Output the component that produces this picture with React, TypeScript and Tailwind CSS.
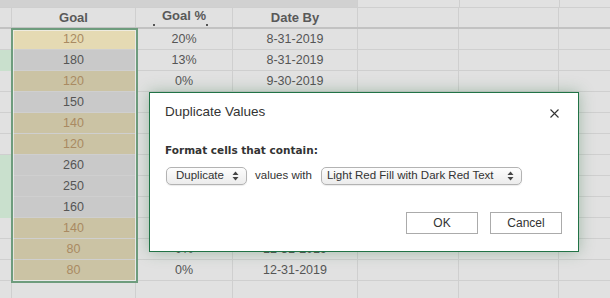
type Row = { goal: string; pct: string; date: string; fill: 'yellow' | 'tan' | 'gray'; mark?: boolean }

const rows: Row[] = [
  { goal: '120', pct: '20%', date: '8-31-2019', fill: 'yellow' },
  { goal: '180', pct: '13%', date: '8-31-2019', fill: 'gray', mark: true },
  { goal: '120', pct: '0%', date: '9-30-2019', fill: 'tan' },
  { goal: '150', pct: '0%', date: '9-30-2019', fill: 'gray' },
  { goal: '140', pct: '0%', date: '10-31-2019', fill: 'tan' },
  { goal: '120', pct: '0%', date: '10-31-2019', fill: 'tan' },
  { goal: '260', pct: '0%', date: '11-30-2019', fill: 'gray', mark: true },
  { goal: '250', pct: '0%', date: '11-30-2019', fill: 'gray', mark: true },
  { goal: '160', pct: '0%', date: '11-30-2019', fill: 'gray', mark: true },
  { goal: '140', pct: '0%', date: '12-31-2019', fill: 'tan' },
  { goal: '80', pct: '0%', date: '12-31-2019', fill: 'tan' },
  { goal: '80', pct: '0%', date: '12-31-2019', fill: 'tan' },
]

const fillClass = {
  yellow: 'bg-[#e5dab3] text-[#a98a62]',
  tan: 'bg-[#cbc3a4] text-[#a98a62]',
  gray: 'bg-[#c9c9c9] text-[#555]',
}

// mac-style up/down stepper arrows
function Arrows() {
  return (
    <svg width="7" height="10" viewBox="0 0 7 10">
      <path d="M3.5 0.5 L6.5 4 L0.5 4 Z" fill="#444" />
      <path d="M3.5 9.5 L6.5 6 L0.5 6 Z" fill="#444" />
    </svg>
  )
}

function Select({ label, width, pad }: { label: string; width: string; pad: string }) {
  return (
    <div
      className={`${width} ${pad} h-[18px] flex items-center justify-between pr-[7px] rounded-[5px] border border-[#b3b3b3] bg-gradient-to-b from-[#fdfdfd] to-[#ececec] shadow-[0_1px_1px_rgba(0,0,0,0.08)] text-[11.5px] text-[#333]`}
    >
      <span>{label}</span>
      <Arrows />
    </div>
  )
}

export default function App() {
  return (
    <div
      className="relative w-[610px] h-[298px] overflow-hidden bg-[#e1e1e1] text-[12px]"
      style={{ fontFamily: '"Liberation Sans", Arial, sans-serif' }}
    >
      {/* top strip */}
      <div className="flex h-[8px] border-b border-[#cfcfcf]">
        <div className="w-[357px] bg-[#d1d1d1]" />
        <div className="w-[102px] border-l border-[#cfcfcf]" />
        <div className="w-[100px] border-l border-[#cfcfcf]" />
        <div className="flex-1 border-l border-[#cfcfcf]" />
      </div>

      {/* header */}
      <div className="flex h-[21px] border-b-2 border-[#c2c2c2] font-bold text-[#595959] text-[13px]">
        <div className="w-[12px] border-r border-[#cfcfcf]" />
        <div className="w-[124px] border-r border-[#cfcfcf] flex items-center justify-center">Goal</div>
        <div className="relative w-[97px] border-r border-[#cfcfcf] flex items-center justify-center pb-1">
          Goal %
          <span className="absolute left-[17px] bottom-[1px] w-[2px] h-[2px] bg-[#555]" />
          <span className="absolute right-[24px] bottom-[1px] w-[2px] h-[2px] bg-[#555]" />
        </div>
        <div className="w-[125px] border-r border-[#cfcfcf] flex items-center justify-center">Date By</div>
        <div className="w-[101px] border-r border-[#cfcfcf]" />
        <div className="w-[100px] border-r border-[#cfcfcf]" />
        <div className="flex-1" />
      </div>

      {/* data rows */}
      {rows.map((r, i) => (
        <div key={i} className="flex h-[21px] text-[#555] text-[12.5px]">
          <div className={`w-[12px] border-r border-b border-[#cfcfcf] ${r.mark ? 'bg-[#c9e0cd] border-b-[#c9e0cd]' : ''}`} />
          <div className={`w-[124px] border-r border-b border-[#cfcfcf] flex items-center justify-center ${fillClass[r.fill]}`}>
            {r.goal}
          </div>
          <div className="w-[97px] border-r border-b border-[#cfcfcf] flex items-center justify-center">{r.pct}</div>
          <div className="w-[125px] border-r border-b border-[#cfcfcf] flex items-center justify-center">{r.date}</div>
          <div className="w-[101px] border-r border-b border-[#cfcfcf]" />
          <div className="w-[100px] border-r border-b border-[#cfcfcf]" />
          <div className="flex-1 border-b border-[#cfcfcf]" />
        </div>
      ))}
      <div className="flex h-[20px]">
        <div className="w-[12px] border-r border-[#cfcfcf]" />
        <div className="w-[124px] border-r border-[#cfcfcf]" />
        <div className="w-[97px] border-r border-[#cfcfcf]" />
        <div className="w-[125px] border-r border-[#cfcfcf]" />
        <div className="w-[101px] border-r border-[#cfcfcf]" />
        <div className="w-[100px] border-r border-[#cfcfcf]" />
        <div className="flex-1" />
      </div>

      {/* selection outline */}
      <div className="absolute left-[11px] top-[28px] w-[127px] h-[255px] border-2 border-[#6e9c7d] pointer-events-none">
        <div className="w-full h-full border border-[#f2f2f2]/70" />
      </div>

      {/* dialog */}
      <div className="absolute left-[149px] top-[92px] w-[430px] h-[160px] bg-white border border-[#217346] shadow-[0_0_14px_rgba(40,110,60,0.35)] text-[#333]">
        <div className="flex items-center justify-between pl-[15px] pr-[19px] pt-[9px]">
          <span className="text-[13.5px] text-[#333]">Duplicate Values</span>
          <svg width="9" height="9" viewBox="0 0 9 9" className="mt-[2px]">
            <path d="M0.5 0.5 L8.5 8.5 M8.5 0.5 L0.5 8.5" stroke="#333" strokeWidth="1.1" />
          </svg>
        </div>
        <div
          className="pl-[15px] pt-[21px] font-bold text-[10.5px] text-[#333]"
          style={{ fontFamily: '"DejaVu Sans", Verdana, sans-serif' }}
        >
          Format cells that contain:
        </div>
        <div className="flex items-center pl-[16px] pt-[8px]">
          <Select label="Duplicate" width="w-[81px]" pad="pl-[9px]" />
          <span className="ml-[8px] mr-[9px] text-[11.5px] text-[#333]">values with</span>
          <Select label="Light Red Fill with Dark Red Text" width="w-[201px]" pad="pl-[5px]" />
        </div>
        <div className="flex justify-end gap-[12px] pr-[16px] pt-[27px]">
          <button className="w-[72px] h-[22px] border border-[#ababab] bg-white text-[12px] text-[#333]">OK</button>
          <button className="w-[72px] h-[22px] border border-[#ababab] bg-white text-[12px] text-[#333]">Cancel</button>
        </div>
      </div>
    </div>
  )
}
